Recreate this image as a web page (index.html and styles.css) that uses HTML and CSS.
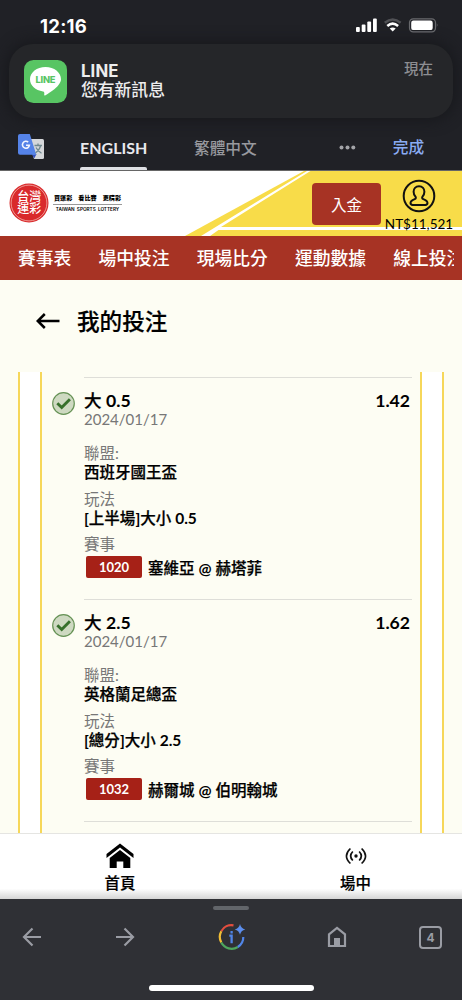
FILE: index.html
```html
<!DOCTYPE html>
<html lang="zh-Hant">
<head>
<meta charset="utf-8">
<meta name="viewport" content="width=device-width, initial-scale=1">
<title>我的投注</title>
<link rel="stylesheet" href="styles.css">
</head>
<body>
<div class="phone">
  <div class="system">
    <div class="status">
      <span class="clock">12:16</span>
      <svg class="status-icons" width="84" height="16" viewBox="0 0 84 16">
        <g fill="#fff"><rect x="1" y="9" width="3.8" height="5" rx="1"/><rect x="6.7" y="6.500" width="3.8" height="7.500" rx="1"/><rect x="12.300" y="3.500" width="3.800" height="10.500" rx="1"/><rect x="18" y="0.500" width="3.800" height="13.500" rx="1"/></g>
        <path d="M29.800 4.800Q37.700-1.800 45.600 4.800" fill="none" stroke="#505155" stroke-width="2.500"/>
        <path d="M32.300 7.900Q37.700 3.400 43.100 7.900" fill="none" stroke="#fff" stroke-width="2.600"/>
        <path d="M34.700 10.600Q37.700 8.600 40.700 10.600L37.700 13.600Z" fill="#fff"/>
        <rect x="54.500" y="0.800" width="26" height="13" rx="3.700" fill="none" stroke="#68696d" stroke-width="1.200"/>
        <rect x="56.200" y="2.500" width="21.500" height="9.600" rx="2.200" fill="#fff"/>
        <path d="M81.800 5.300Q83.500 7.300 81.800 9.300Z" fill="#68696d"/>
      </svg>
    </div>
    <div class="notice">
      <svg class="line-icon" width="43" height="43" viewBox="0 0 43 43">
        <rect width="43" height="43" rx="9.500" fill="#58c563"/>
        <path d="M21.500 7C12.800 7 6 12.500 6 19.300c0 6.200 5.400 11.200 13 12.100 1.400.2 1.500 1.200 1.200 3.400-.1.900.5 1 1.300.5 4.500-2.600 10.200-6.500 13-10.200 1.600-2 2.500-3.900 2.500-5.800C37 12.500 30.200 7 21.500 7Z" fill="#fff"/>
        <text class="line-word" x="21.500" y="22.800" text-anchor="middle" textLength="20">LINE</text>
      </svg>
      <div class="notice-text"><b>LINE</b><span>您有新訊息</span></div>
      <span class="now">現在</span>
    </div>
    <div class="translate">
      <svg class="g-translate" width="27" height="26" viewBox="0 0 27 26">
        <path d="M10 5h14.500q1.500 0 1.500 1.500v17q0 1.500-1.500 1.500H16Z" fill="#d5d7da"/>
        <path d="M14 20.500 18.500 20l-2.300 4.500Z" fill="#3450bd"/>
        <path d="M2 0h9.800l6.500 20.700H2Q0 20.700 0 18.700V2Q0 0 2 0Z" fill="#5583e8"/>
        <path d="M16.500 11.500h7.500M20 9.500v2M22.700 11.700q-1.200 4.500-5.200 7.300M18 13.500q1.700 3.500 5.500 5.700" stroke="#71898f" stroke-width="1.300" fill="none"/>
        <path d="M10.200 8.100A3.500 3.500 0 1 0 11.400 11.200H8" fill="none" stroke="#f2f5ff" stroke-width="1.600"/>
      </svg>
      <span class="lang on">ENGLISH</span>
      <span class="lang">繁體中文</span>
      <svg class="dots" width="17" height="5" viewBox="0 0 17 5" fill="#a3a4a8"><circle cx="2.500" cy="2.500" r="2"/><circle cx="8.500" cy="2.500" r="2"/><circle cx="14.300" cy="2.500" r="2"/></svg>
      <span class="done">完成</span>
    </div>
  </div>

  <header class="masthead">
    <svg class="rays" viewBox="0 0 462 65" width="462" height="65">
      <path d="M185 65 304 0H462V65Z" fill="#f8dc49"/>
      <path d="M201 65 307 0h3.500L221 56H462v3H218.500L210 65Z" fill="#fff"/>
    </svg>
    <div class="brand">
      <svg class="seal" width="40" height="40" viewBox="0 0 40 40">
        <circle cx="20" cy="20" r="19.500" fill="#d9292b"/>
        <circle cx="20" cy="20" r="17.900" fill="none" stroke="#f6c5bd" stroke-width=".7"/>
        <text class="seal-text"><tspan x="8.300" y="17.800">台灣</tspan><tspan x="8.300" y="30.300">運彩</tspan></text>
      </svg>
      <div class="slogan"><b><span>買運彩</span><span>看比賽</span><span>更精彩</span></b><small>TAIWAN SPORTS LOTTERY</small></div>
    </div>
    <button class="deposit">入金</button>
    <div class="account">
      <svg width="34" height="34" viewBox="0 0 34 34" fill="none" stroke="#111" stroke-width="2">
        <circle cx="17" cy="17" r="15.300"/>
        <path d="M17 7.200c-3.400 0-5.400 2.500-5.400 5.500 0 2 .8 3.700 1.900 5 .7.900.3 2-.8 2.400-2.500.9-4.200 1.800-4.200 4 0 1.300.9 1.800 2.100 1.800h12.800c1.200 0 2.100-.5 2.100-1.800 0-2.200-1.700-3.100-4.200-4-1.100-.4-1.500-1.500-.8-2.400 1.100-1.300 1.900-3 1.900-5 0-3-2-5.500-5.400-5.500Z"/>
      </svg>
      <span>NT$11,521</span>
    </div>
  </header>

  <nav class="menu"><span>賽事表</span><span>場中投注</span><span>現場比分</span><span>運動數據</span><span>線上投注</span></nav>

  <main class="page">
    <div class="title">
      <svg width="24" height="16" viewBox="0 0 24 16" fill="none" stroke="#000" stroke-width="2.500"><path d="M23.500 8H2M8.800 1 1.700 8l7.100 7"/></svg>
      <h1>我的投注</h1>
    </div>
    <div class="ticket-edge">
      <div class="ticket">
        <section class="bet">
          <svg class="check" width="23" height="23" viewBox="0 0 23 23"><circle cx="11.500" cy="11.500" r="10.800" fill="#ced9c1" stroke="#669255" stroke-width="1.200"/><path d="m5.300 11.300 4.400 4.200 8.200-8.200" fill="none" stroke="#37702b" stroke-width="2.900"/></svg>
          <div class="detail">
            <div class="pick"><span>大 <b>0.5</b></span><b>1.42</b></div>
            <div class="date">2024/01/17</div>
            <dl>
              <dt>聯盟:</dt><dd>西班牙國王盃</dd>
              <dt>玩法</dt><dd><b>[</b>上半場<b>]</b>大小 <b>0.5</b></dd>
              <dt>賽事</dt><dd class="match"><span class="code">1020</span><span>塞維亞 <b>@</b> 赫塔菲</span></dd>
            </dl>
          </div>
        </section>
        <section class="bet">
          <svg class="check" width="23" height="23" viewBox="0 0 23 23"><circle cx="11.500" cy="11.500" r="10.800" fill="#ced9c1" stroke="#669255" stroke-width="1.200"/><path d="m5.300 11.300 4.400 4.200 8.200-8.200" fill="none" stroke="#37702b" stroke-width="2.900"/></svg>
          <div class="detail">
            <div class="pick"><span>大 <b>2.5</b></span><b>1.62</b></div>
            <div class="date">2024/01/17</div>
            <dl>
              <dt>聯盟:</dt><dd>英格蘭足總盃</dd>
              <dt>玩法</dt><dd><b>[</b>總分<b>]</b>大小 <b>2.5</b></dd>
              <dt>賽事</dt><dd class="match"><span class="code">1032</span><span>赫爾城 <b>@</b> 伯明翰城</span></dd>
            </dl>
          </div>
        </section>
        <section class="bet"><span></span><div class="detail"></div></section>
      </div>
    </div>
  </main>

  <div class="tabs">
    <div class="tab">
      <svg width="28" height="26" viewBox="0 0 28 26"><path d="M14 0.500 27.500 11v4L14 4.500.5 15v-4Z"/><path d="M14 7 24.300 15v10H17.300v-6.500h-6.600V25H3.700V15Z"/></svg>
      <span>首頁</span>
    </div>
    <div class="tab">
      <svg width="22" height="26" viewBox="0 0 22 26" fill="none" stroke="#111" stroke-width="1.700"><path d="M5.400 5.500Q-2.500 13 5.400 20.500M16.600 5.500Q24.500 13 16.600 20.500M7.800 8.500Q3.500 13 7.800 17.500M14.200 8.500Q18.500 13 14.200 17.500"/><circle cx="11" cy="13" r="1.700" fill="#111" stroke="none"/></svg>
      <span>場中</span>
    </div>
  </div>

  <footer class="toolbar">
    <div class="grabber"></div>
    <div class="tools">
      <svg width="20" height="20" viewBox="0 0 20 20" class="stroke"><path d="M19 10H2M10.500 1.500 2 10l8.500 8.500"/></svg>
      <svg width="20" height="20" viewBox="0 0 20 20" class="stroke"><path d="M1 10h17M9.500 1.500 18 10l-8.500 8.500"/></svg>
      <svg width="28" height="28" viewBox="0 0 28 28" fill="none" stroke-width="2.200">
        <path d="M3.300 8.200A11.700 11.700 0 0 1 15.500 2.400" stroke="#e34e3f"/>
        <path d="M3.300 8.200A11.700 11.700 0 0 0 3.300 19.500" stroke="#f1bd35"/>
        <path d="M3.300 19.500A11.700 11.700 0 0 0 19.800 24" stroke="#4fa75d"/>
        <path d="M19.800 24A11.700 11.700 0 0 0 25.300 14" stroke="#5185e8"/>
        <path d="M11.300 12.700h2.300v7.600M13.600 8v2.400" stroke="#5185e8" stroke-width="2.300"/>
        <path d="M22 1q.9 4.400 5.300 5.400-4.400 1-5.300 5.400-.9-4.400-5.300-5.400Q21.100 5.400 22 1Z" fill="#5c8eed"/>
      </svg>
      <svg width="20" height="22" viewBox="0 0 20 22" class="stroke"><path d="M2 8.300 10 2l8 6.300V20H2Z"/><path d="M7 12h6v8H7Z" fill="#9a9ca4" stroke="none"/></svg>
      <span class="count">4</span>
    </div>
    <div class="home-bar"></div>
  </footer>
</div>
</body>
</html>
```
FILE: styles.css
```css
* { box-sizing: border-box; }
body { margin: 0; font-family: Lato, "Noto Sans CJK TC", sans-serif; color: #000; }
svg { display: block; flex: none; }
.phone { width: 462px; height: 1000px; overflow: hidden; display: flex; flex-direction: column; white-space: nowrap; background: #fdfdf3; }

.system { height: 170px; flex: none; background: #202126; font-family: Inter, "Noto Sans CJK TC", sans-serif; }
.status { height: 44px; display: flex; justify-content: space-between; padding: 17px 23px 0 40px; color: #fff; }
.clock { font-size: 18.500px; line-height: 18px; font-weight: 700; letter-spacing: .25px; }
.status-icons { margin-top: 1px; }
.notice { height: 74px; margin: 0 9px; padding: 16px 20px 0 15px; border-radius: 24px; background: #252629; box-shadow: 0 0 14px 3px #18191d; display: flex; }
.line-word { font: 800 9.300px Inter, sans-serif; fill: #58c563; }
.notice-text { margin: 2px 0 0 14px; flex: 1; color: #ededee; display: flex; flex-direction: column; font-size: 16.800px; }
.notice-text b { line-height: 19px; letter-spacing: .1px; }
.notice-text span { line-height: 19px; font-weight: 500; }
.now { margin-top: 1px; color: #8d8e92; font-size: 14.500px; line-height: 16px; font-weight: 500; }
.translate { height: 52px; display: flex; padding-left: 18px; color: #98999e; }
.g-translate { margin-top: 16px; }
.lang { margin-left: 47px; padding-top: 19px; font-size: 15.700px; line-height: 24px; font-weight: 500; }
.lang.on { margin-left: 35px; padding-top: 18px; width: 67px; color: #e8e9ed; font-family: Lato, sans-serif; font-size: 16px; font-weight: 700; display: flex; flex-direction: column; justify-content: space-between; }
.lang.on::after { content: ""; height: 3px; border-radius: 2px 2px 0 0; background: #dfe0e4; }
.dots { margin: 27px 0 0 82px; }
.done { margin-left: 37px; padding-top: 18px; font-size: 15.700px; line-height: 24px; font-weight: 500; color: #8aabf2; }

.masthead { height: 66px; flex: none; display: grid; grid-template-columns: 312px 69px 1fr; background: #fff; border-top: 1px solid #666; }
.rays, .brand { grid-row: 1; grid-column: 1; }
.brand { display: flex; padding: 12px 0 0 9px; z-index: 1; }
.seal-text { font: 500 12px "Noto Sans CJK TC", sans-serif; fill: #fff; }
.slogan { margin: 10px 0 0 4px; width: 69px; }
.slogan b { display: flex; justify-content: space-between; padding: 0 1px; border-bottom: 1px solid #999; font-size: 6.100px; line-height: 10px; height: 12px; font-weight: 900; }
.slogan small { display: block; text-align: center; font: 600 4.700px/9px Inter, sans-serif; word-spacing: 1px; }
.deposit { grid-row: 1; grid-column: 2; z-index: 1; margin-top: 12px; height: 42px; border: 0; border-radius: 4px; padding: 0; background: #a73324; color: #fff; font: 400 15.500px/40px "Noto Sans CJK TC", sans-serif; }
.account { grid-row: 1; grid-column: 3; z-index: 1; display: flex; flex-direction: column; align-items: center; padding: 8px 5px 0 0; }
.account span { font-size: 13.500px; line-height: 17px; margin-top: 3px; }

.menu { height: 44px; flex: none; padding-left: 18px; border-right: 8px solid #a73324; background: #a73324; color: #fff; display: flex; gap: 27.100px; overflow: hidden; font-size: 17.800px; line-height: 45px; font-weight: 500; }

.page { height: 553px; flex: none; overflow: hidden; background: #fdfdf3; }
.title { height: 92px; display: flex; padding: 33px 0 0 36px; gap: 17px; }
h1 { margin: -8px 0 0; font-size: 22.600px; line-height: 34px; font-weight: 500; -webkit-text-stroke: .2px #000; }
.ticket-edge { margin: 0 18px; height: 461px; border: solid #f6d75a; border-width: 0 2px; padding: 0 20px; background: #fff; }
.ticket { height: 461px; border: solid #f6d75a; border-width: 0 2px; padding: 5px 8px 0 10px; background: #fdfdf3; }
.bet { height: 222px; display: grid; grid-template-columns: 32px 1fr; }
.check { margin-top: 15px; }
.detail { border-top: 1px solid #deded8; }
.pick { display: flex; justify-content: space-between; padding: 11px 2px 0 0; font-size: 17.600px; line-height: 24px; height: 34px; font-weight: 500; }
.pick span, dd { -webkit-text-stroke: .25px #000; }
.pick b, dd b, .code { -webkit-text-stroke: 0; }
.date { font-size: 15px; line-height: 15px; height: 18px; color: #777; }
dl { margin: 14px 0 0; font-size: 15.500px; line-height: 19px; }
dt { color: #777; height: 19px; }
dd { margin: 0 0 8px; height: 19px; font-weight: 500; }
dt:nth-of-type(n + 2) { margin-top: -.5px; }
.match { display: flex; line-height: 24px; height: 22px; margin-top: 2px; }
.code { width: 56px; margin: 0 6px 0 2px; border-radius: 2px; background: #a62117; color: #fff; text-align: center; font-size: 13px; font-weight: 700; line-height: 22px; }

.tabs { height: 66px; flex: none; display: grid; grid-template-columns: 1fr 1fr; background: linear-gradient(#fff 84%, #d5d5d5); border-top: 1px solid #e5e5e2; }
.tab { display: flex; flex-direction: column; align-items: center; padding-top: 9px; font-size: 15.400px; line-height: 22px; font-weight: 500; }
.tab:first-child { padding-left: 9px; }
.tab:last-child { padding-left: 18px; }
.tab span { margin-top: 3px; -webkit-text-stroke: .2px #000; }

.toolbar { height: 101px; flex: none; background: #2f3035; display: flex; flex-direction: column; align-items: center; }
.grabber { width: 36px; height: 4px; margin-top: 7px; border-radius: 2px; background: #62656a; }
.tools { width: 100%; height: 54px; display: grid; grid-template-columns: 93px 103px 109px 92px 23px; align-items: center; padding-left: 22px; }
.stroke { fill: none; stroke: #9a9ca4; stroke-width: 2.200; }
.count { width: 23px; height: 23px; border: 2px solid #9a9ca4; border-radius: 4px; color: #9a9ca4; text-align: center; font: 700 12px/19px Inter, sans-serif; }
.home-bar { width: 165px; height: 6px; border-radius: 3px; background: #fff; margin-top: 21px; }
```
